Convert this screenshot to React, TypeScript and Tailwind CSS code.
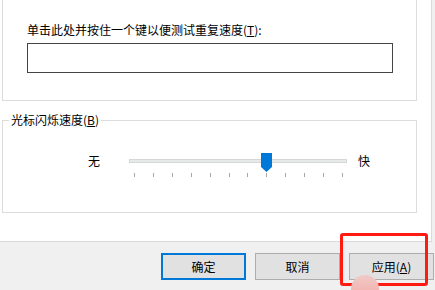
const ticks = Array.from({ length: 12 });

const Btn = ({ children, primary }: { children: React.ReactNode; primary?: boolean }) => (
  <div
    className={
      "flex h-[27px] w-[85px] shrink-0 items-center justify-center bg-[#e1e1e1] text-[12px] text-black " +
      (primary ? "border-2 border-[#0078d7]" : "border border-[#adadad]")
    }
  >
    {children}
  </div>
);

export default function App() {
  return (
    <div
      className="relative h-[290px] w-[435px] overflow-hidden bg-[#f0f0f0]"
      style={{ fontFamily: '"Noto Sans CJK SC", "Noto Sans", sans-serif' }}
    >
      {/* tab page */}
      <div className="h-[242px] w-[432px] border-r border-b border-[#d9d9d9] bg-white pl-[2px]">
        {/* repeat-rate group (top is scrolled off) */}
        <div className="h-[101px] w-[415px] border-x border-b border-[#dcdcdc] pl-[24px] pt-[22px]">
          <div className="h-[16px] text-[12px] leading-[16px] text-black">
            单击此处并按住一个键以便测试重复速度(<span className="underline">T</span>):
          </div>
          <div className="mt-[5px] h-[30px] w-[366px] border border-[#454545] bg-white" />
        </div>

        {/* cursor blink rate */}
        <fieldset className="mt-[11px] h-[101px] w-[415px] border border-[#dcdcdc]">
          <legend className="ml-[6px] px-[2px] text-[12px] leading-[16px] text-black">
            光标闪烁速度(<span className="underline">B</span>)
          </legend>
          <div className="flex items-start pl-[85px] pt-[25px]">
            <span className="text-[12px] leading-[16px] text-black">无</span>
            <div className="relative ml-[29px] w-[218px]">
              <div className="mt-[6px] h-[4px] border border-[#d6d6d6] bg-[#e7eaea]" />
              <svg
                className="absolute left-[132px] top-[0px]"
                width="11"
                height="19"
                viewBox="0 0 11 19"
              >
                <polygon points="0,0 11,0 11,14 5.5,19 0,14" fill="#0078d7" />
              </svg>
              <div className="mt-[10px] flex justify-between pl-[5px] pr-[4px]">
                {ticks.map((_, i) => (
                  <div key={i} className="h-[4px] w-[1px] bg-[#a8a8a8]" />
                ))}
              </div>
            </div>
            <span className="ml-[11px] text-[12px] leading-[16px] text-black">快</span>
          </div>
        </fieldset>
      </div>

      {/* dialog buttons */}
      <div className="flex gap-[9px] pl-[161px] pt-[11px]">
        <Btn primary>确定</Btn>
        <Btn>取消</Btn>
        <Btn>
          应用(<span className="underline">A</span>)
        </Btn>
      </div>

      {/* highlight annotation */}
      <div className="absolute left-[340px] top-[233px] h-[53px] w-[88px] rounded-[3px] border-[3px] border-[#ff1a12]" />
      <div className="absolute left-[351px] top-[275px] h-[28px] w-[28px] rounded-full bg-gradient-to-b from-[#efcac8] to-[#f4a69f]" />
    </div>
  );
}
